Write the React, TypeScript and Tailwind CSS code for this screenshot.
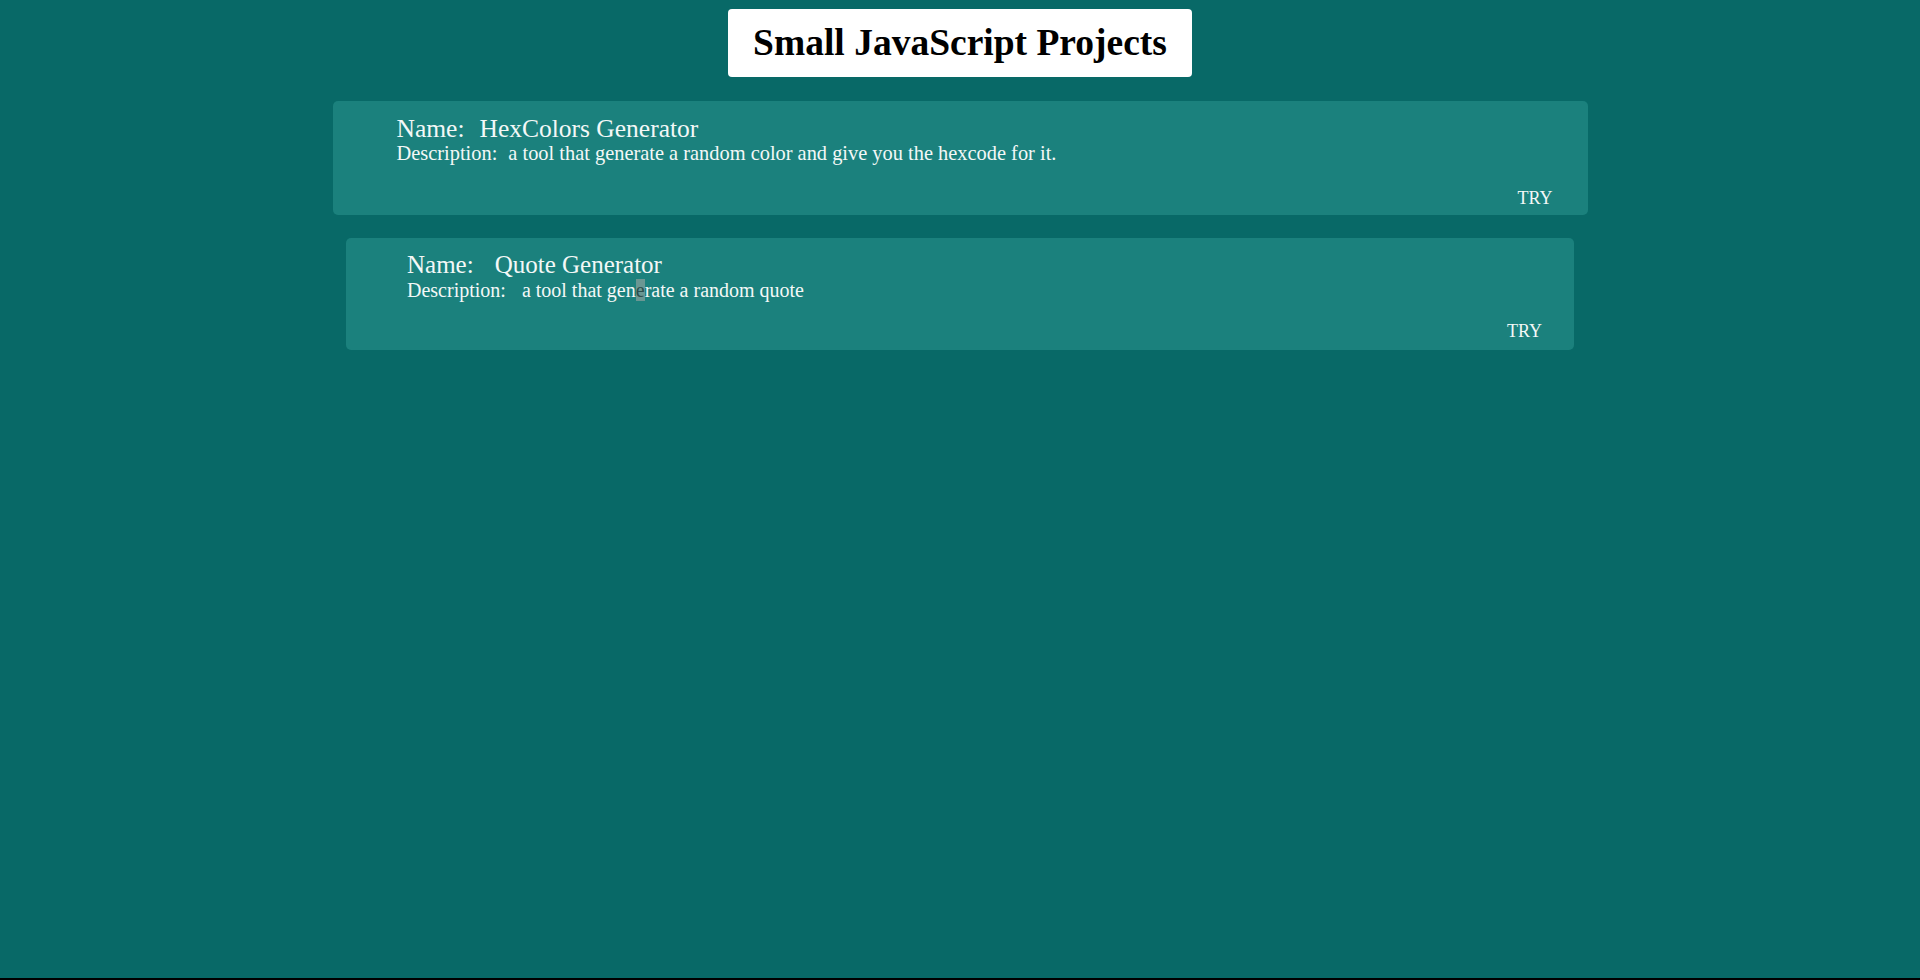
const projects = [
  {
    name: "HexColors Generator",
    description: "a tool that generate a random color and give you the hexcode for it.",
  },
  {
    name: "Quote Generator",
    description: "a tool that generate a random quote",
  },
];

const serif = "font-['Liberation_Serif','Times_New_Roman',serif]";

const App = () => {
  return (
    <div className={`min-h-screen bg-black ${serif}`}>
      <div className="h-[978px] bg-[#086967] flex flex-col items-center pt-[9px]">
        {/* titel */}
        <div className="bg-white rounded-[4px] px-[25px] pt-[12px] pb-[13px]">
          <h1 className="text-[37.5px] font-bold text-black leading-[1.15]">
            Small JavaScript Projects
          </h1>
        </div>

        {/* prvi projekt */}
        <div className="mt-[24px] w-[1255px] h-[114px] bg-[#1b817d] rounded-[5px] pl-[64px] pr-[35px] pt-[14px] flex flex-col text-[#f3f8f7]">
          <div className="text-[25.5px] leading-[1.06]">
            <span className="mr-[15px]">Name:</span>
            <span>{projects[0].name}</span>
          </div>
          <div className="text-[20.4px] leading-[1.15]">
            <span className="mr-[11px]">Description:</span>
            <span>{projects[0].description}</span>
          </div>
          <div className="mt-[22px] self-end text-[18px] leading-[1.15]">TRY</div>
        </div>

        {/* drugi projekt */}
        <div className="mt-[23px] w-[1228px] h-[112px] bg-[#1b817d] rounded-[5px] pl-[61px] pr-[32px] pt-[13px] flex flex-col text-[#f3f8f7]">
          <div className="text-[25px] leading-[1.12]">
            <span className="mr-[21px]">Name:</span>
            <span>{projects[1].name}</span>
          </div>
          <div className="text-[20px] leading-[1.15]">
            <span className="mr-[16px]">Description:</span>
            <span>
              a tool that gen
              <span className="bg-[#6a9793] text-[#2c4f4d]">e</span>
              rate a random quote
            </span>
          </div>
          <div className="mt-[19px] self-end text-[18px] leading-[1.15]">TRY</div>
        </div>
      </div>
    </div>
  );
};

export default App;
